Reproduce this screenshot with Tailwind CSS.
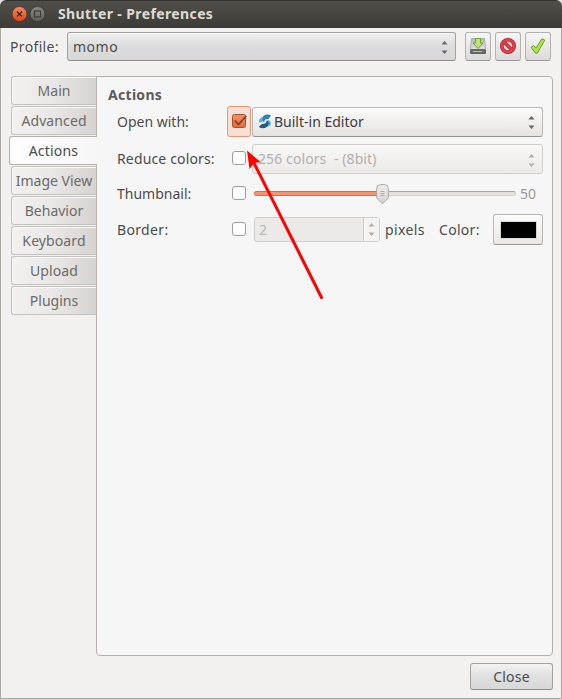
<!DOCTYPE html>
<html lang="en">
<head>
<meta charset="utf-8">
<title>Shutter - Preferences</title>
<script src="https://cdn.jsdelivr.net/npm/@tailwindcss/browser@4"></script>
</head>
<body class="w-[562px] h-[699px] overflow-hidden bg-[#e4e3e1]">
<div class="relative flex flex-col w-[562px] h-[699px] overflow-hidden rounded-t-[6px] bg-[#f2f1f0] text-[#4c4c4c] font-['Noto_Sans','Open_Sans',sans-serif] text-[14px] leading-[20px] whitespace-nowrap">
  <header class="flex items-center shrink-0 h-[28px] pl-[12px] bg-linear-to-b from-[#504f49] to-[#3c3b37] border-t border-[#33322e]">
    <svg class="w-[34px] h-[16px] -mt-px shrink-0" viewBox="0 0 34 16">
      <defs>
        <linearGradient id="closeFill" x2="0" y2="1"><stop stop-color="#f58a64"/><stop offset="1" stop-color="#dd4814"/></linearGradient>
        <linearGradient id="maxFill" x2="0" y2="1"><stop stop-color="#8b8a84"/><stop offset="1" stop-color="#605f59"/></linearGradient>
      </defs>
      <circle cx="7.5" cy="8" r="7.5" fill="url(#closeFill)" stroke="#33322e" stroke-width=".7"/>
      <path d="M5 5.5l5 5M10 5.5l-5 5" stroke="#3c2a22" stroke-width="1.3"/>
      <circle cx="25.5" cy="8" r="7.5" fill="url(#maxFill)" stroke="#33322e" stroke-width=".7"/>
      <rect x="22.5" y="5" width="6" height="6" fill="none" stroke="#383732" stroke-width="1.1"/>
    </svg>
    <h1 class="ml-[12px] -mt-px font-bold text-[#dfdbd2] tracking-[0.38px]">Shutter - Preferences</h1>
  </header>

  <main class="flex flex-col grow border-x border-b border-[#aca9a4]">
    <div class="flex h-[29px] mt-[4px] pl-[9px] items-center">
      <label class="w-[57px] tracking-[0.35px]">Profile:</label>
      <div class="flex items-center justify-between w-[389px] h-[29px] pl-[5px] pr-[7px] rounded-[3px] border border-[#a3a19e] border-b-[#8f8d8a] bg-linear-to-b from-[#f0f0f0] via-[#dcdcdc] to-[#d8d8d8] shadow-[inset_0_1px_0_#fafafa]">
        <span class="tracking-[0.5px]">momo</span>
        <svg class="w-[7px] h-[13px] mt-[2px]" viewBox="0 0 7 13"><path d="M.5 3.500L3.500 0l3 3.500zM.5 9.500L3.500 13l3-3.500z" fill="#686868"/></svg>
      </div>
      <div class="flex gap-[4px] ml-[9px]">
        <button class="flex items-center justify-center w-[26px] h-[29px] rounded-[3px] border border-[#b3b1ae] border-b-[#999794] bg-linear-to-b from-[#f6f6f6] to-[#dadada]">
          <svg class="w-[18px] h-[18px] -mt-px shrink-0" viewBox="0 0 18 18">
            <defs><linearGradient id="disk" x2="0" y2="1"><stop stop-color="#b4b6b2"/><stop offset="1" stop-color="#f2f2f0"/></linearGradient></defs>
            <path d="M2.500 1.500h13l1 9.500v5.500h-15v-5.500z" fill="url(#disk)" stroke="#a2a4a0" stroke-width=".8"/>
            <rect x="1.500" y="12.500" width="15" height="4" rx=".6" fill="#6a6c6a" stroke="#4a4d4c" stroke-width=".7"/>
            <path d="M4 14.500h9" stroke="#b8bab6"/>
            <path d="M6.500 1.500h5v4.500h2.500L9 11.500 4 6h2.500z" fill="#c0e27c" stroke="#6aa52a" stroke-width="1"/>
          </svg>
        </button>
        <button class="flex items-center justify-center w-[26px] h-[29px] rounded-[3px] border border-[#b3b1ae] border-b-[#999794] bg-linear-to-b from-[#f6f6f6] to-[#dadada]">
          <svg class="w-[18px] h-[18px] -mt-[2px] shrink-0" viewBox="0 0 18 18">
            <circle cx="9" cy="9" r="6.200" fill="#e8dede" stroke="#b51a2c" stroke-width="3.600"/>
            <path d="M4.800 4.800l8.400 8.400" stroke="#b51a2c" stroke-width="3.400"/>
            <circle cx="9" cy="9" r="6.200" fill="none" stroke="#dc4248" stroke-width="2.200"/>
            <path d="M4.800 4.800l8.400 8.400" stroke="#dc4248" stroke-width="2"/>
          </svg>
        </button>
        <button class="flex items-center justify-center w-[26px] h-[29px] rounded-[3px] border border-[#b3b1ae] border-b-[#999794] bg-linear-to-b from-[#f6f6f6] to-[#dadada]">
          <svg class="w-[18px] h-[18px] -mt-[2px] shrink-0" viewBox="0 0 18 18">
            <path d="M2 10.300l2.700-1.700 2.300 2.500L12.800 1.800l3 1.200L8.300 16.200H6.500z" fill="#b4df4c" stroke="#6d9f2c" stroke-width="1" stroke-linejoin="round"/>
          </svg>
        </button>
      </div>
    </div>

    <div class="flex mt-[15px] h-[580px] pl-[8px]">
      <nav class="relative z-10 flex flex-col gap-[1px] w-[88px] items-end text-center text-[#6b6a69] shrink-0 -mr-px">
        <div class="w-[86px] h-[29px] pt-[4px] rounded-l-[3px] border border-[#c4c2be] border-r-[#b9b6b1] bg-linear-to-r from-[#f2f1f0] via-[#e9e7e5] to-[#d5d2cf] shadow-[inset_1px_1px_0_#f9f8f7]">Main</div>
        <div class="w-[86px] h-[29px] pt-[4px] rounded-l-[3px] border border-[#c4c2be] border-r-[#b9b6b1] bg-linear-to-r from-[#f2f1f0] via-[#e9e7e5] to-[#d5d2cf] shadow-[inset_1px_1px_0_#f9f8f7] tracking-[0.1px]">Advanced</div>
        <div class="w-[88px] h-[29px] pt-[4px] rounded-l-[3px] border border-r-0 border-[#b4b1ac] bg-linear-to-r from-white to-[#f6f6f6] text-[#4c4c4c] tracking-[0.2px]">Actions</div>
        <div class="w-[86px] h-[29px] pt-[4px] rounded-l-[3px] border border-[#c4c2be] border-r-[#b9b6b1] bg-linear-to-r from-[#f2f1f0] via-[#e9e7e5] to-[#d5d2cf] shadow-[inset_1px_1px_0_#f9f8f7]">Image View</div>
        <div class="w-[86px] h-[29px] pt-[4px] rounded-l-[3px] border border-[#c4c2be] border-r-[#b9b6b1] bg-linear-to-r from-[#f2f1f0] via-[#e9e7e5] to-[#d5d2cf] shadow-[inset_1px_1px_0_#f9f8f7]">Behavior</div>
        <div class="w-[86px] h-[29px] pt-[4px] rounded-l-[3px] border border-[#c4c2be] border-r-[#b9b6b1] bg-linear-to-r from-[#f2f1f0] via-[#e9e7e5] to-[#d5d2cf] shadow-[inset_1px_1px_0_#f9f8f7] tracking-[0.1px]">Keyboard</div>
        <div class="w-[86px] h-[29px] pt-[4px] rounded-l-[3px] border border-[#c4c2be] border-r-[#b9b6b1] bg-linear-to-r from-[#f2f1f0] via-[#e9e7e5] to-[#d5d2cf] shadow-[inset_1px_1px_0_#f9f8f7] tracking-[0.1px]">Upload</div>
        <div class="w-[86px] h-[29px] pt-[4px] rounded-l-[3px] border border-[#c4c2be] border-r-[#b9b6b1] bg-linear-to-r from-[#f2f1f0] via-[#e9e7e5] to-[#d5d2cf] shadow-[inset_1px_1px_0_#f9f8f7]">Plugins</div>
      </nav>

      <section class="w-[457px] h-[580px] rounded-r-[4px] rounded-bl-[4px] border border-[#b4b1ac] bg-[#f6f6f6] pl-[11px] pt-[8px]">
        <h2 class="font-bold text-[#5c5b5a] tracking-[0.3px]">Actions</h2>

        <div class="flex items-center h-[31px] mt-[1px] pl-[9px]">
          <label class="w-[110px]">Open with:</label>
          <span class="flex items-center justify-center w-[24px] h-[31px] rounded-[3px] border border-[#f2946e] bg-[#f6dfd7] shrink-0">
            <svg class="w-[16px] h-[16px] -mt-px" viewBox="0 0 16 16">
              <defs><linearGradient id="tick" x2="0" y2="1"><stop stop-color="#f39066"/><stop offset="1" stop-color="#e9693a"/></linearGradient></defs>
              <rect x="1.500" y="1.500" width="13" height="13" rx="2" fill="url(#tick)" stroke="#a5502c"/>
              <path d="M3.800 7.500l3.600 4L15.300 3" fill="none" stroke="#7a3f29" stroke-width="1.700"/>
            </svg>
          </span>
          <div class="flex items-center w-[291px] h-[30px] ml-[1px] pl-[5px] pr-[7px] rounded-[3px] border border-[#b9b7b4] border-b-[#94928f] bg-linear-to-b from-[#fbfbfb] to-[#e4e3e1]">
            <svg class="w-[14px] h-[15px]" viewBox="0 0 14 15">
              <path d="M13 1.500C9-.5 4.500 1 4 5c0 2 1 3 2.500 3C6 5.500 8 4.500 10.500 5z" fill="#2b83b5"/>
              <path d="M5 3C2 3.500.5 6 1 8.500l4-.5C3.500 7 3.500 5 5 3z" fill="#5db4dc"/>
              <path d="M.8 13C4.500 15.500 10 14 11 10c.3-2.200-1-3.500-2.700-3.500C9 9 6.500 10.500 4 10z" fill="#1c5f8e"/>
              <path d="M9.500 6C12 6.300 13.300 8 12.500 11L9.500 13C11.300 10.500 11 8 9.500 6z" fill="#4aa3d0"/>
            </svg>
            <span class="ml-[2px] grow text-[#3c3c3c]">Built-in Editor</span>
            <svg class="w-[7px] h-[13px] mt-[2px]" viewBox="0 0 7 13"><path d="M.5 3.500L3.500 0l3 3.500zM.5 9.500L3.500 13l3-3.500z" fill="#686868"/></svg>
          </div>
        </div>

        <div class="flex items-center h-[30px] mt-[7px] pl-[9px]">
          <label class="w-[115px] tracking-[0.15px]">Reduce colors:</label>
          <span class="w-[14px] h-[14px] -mt-[2px] rounded-[3px] border border-[#a19d99] bg-white shrink-0"></span>
          <div class="flex items-center justify-between w-[291px] h-[30px] ml-[6px] pl-[5px] pr-[7px] rounded-[3px] border border-[#d0cecb] bg-linear-to-b from-[#f7f7f6] to-[#ebeae8] text-[#b2afac]">
            <span class="whitespace-pre tracking-[0.1px]">256 colors  - (8bit)</span>
            <svg class="w-[7px] h-[13px] mt-[2px]" viewBox="0 0 7 13"><path d="M.5 3.500L3.500 0l3 3.500zM.5 9.500L3.500 13l3-3.500z" fill="#b2afac"/></svg>
          </div>
        </div>

        <div class="flex items-center h-[30px] mt-[5px] pl-[9px]">
          <label class="w-[115px]">Thumbnail:</label>
          <span class="w-[14px] h-[14px] -mt-[2px] rounded-[3px] border border-[#a19d99] bg-white shrink-0"></span>
          <div class="relative w-[262px] h-[20px] ml-[8px]">
            <div class="flex mt-[7px] h-[5px] rounded-[3px] border border-[#d6d3cf] border-t-[#a9a5a0] bg-[#e4e2df]">
              <div class="-mt-px -ml-px h-[5px] w-[130px] rounded-l-[3px] border border-[#d66f45] bg-[#f49470]"></div>
            </div>
            <svg class="absolute left-[122px] top-0 w-[13px] h-[21px]" viewBox="0 0 13 21">
              <defs><linearGradient id="knob" x2="0" y2="1"><stop stop-color="#f0efed"/><stop offset="1" stop-color="#d3d1ce"/></linearGradient></defs>
              <path d="M.7 4.500Q.7.600 4.500.600h4Q12.300.600 12.300 4.500v9.500L6.500 19.800.7 14z" fill="url(#knob)" stroke="#aaa7a3"/>
              <path d="M4.500 7.500h4M4.500 9.500h4M4.500 11.500h4" stroke="#a09d99" stroke-width=".8"/>
            </svg>
          </div>
          <span class="ml-[4px] text-[#9c9a97]">50</span>
        </div>

        <div class="flex items-center h-[32px] mt-[5px] pl-[9px]">
          <label class="w-[115px] tracking-[0.35px]">Border:</label>
          <span class="w-[14px] h-[14px] -mt-[2px] rounded-[3px] border border-[#a19d99] bg-white shrink-0"></span>
          <div class="flex w-[126px] h-[25px] ml-[8px] -mt-px rounded-[3px] border border-[#d0cecb] bg-[#ebeae8] text-[#b9b6b3]">
            <span class="grow pl-[4px] pt-[2px]">2</span>
            <span class="flex items-center justify-center w-[16px] border-l border-[#d0cecb] bg-[#f4f3f2]">
              <svg class="w-[7px] h-[13px]" viewBox="0 0 7 13"><path d="M.5 3.500L3.500 0l3 3.500zM.5 9.500L3.500 13l3-3.500z" fill="#b2afac"/></svg>
            </span>
          </div>
          <span class="ml-[5px] w-[54px] tracking-[0.4px]">pixels</span>
          <label class="w-[54px] tracking-[0.3px]">Color:</label>
          <button class="flex items-center justify-center w-[50px] h-[31px] -mt-px rounded-[3px] border border-[#b9b7b4] border-b-[#999794] bg-linear-to-b from-[#fbfbfb] to-[#e9e8e6]">
            <span class="w-[37px] h-[18px] border border-[#dcd6d3] bg-black"></span>
          </button>
        </div>
      </section>
    </div>

    <button class="self-end mt-[7px] mr-[8px] w-[83px] h-[27px] rounded-[3px] border border-[#a3a19e] border-b-[#8f8d8a] bg-linear-to-b from-[#f2f2f2] via-[#e0e0e0] to-[#d8d8d8] tracking-[0.2px] leading-[24px]">Close</button>
  </main>

  <svg class="absolute left-[240px] top-[145px] w-[90px] h-[160px] pointer-events-none" viewBox="0 0 90 160">
    <path d="M81.500 152.500L12.500 15" stroke="#f00" stroke-width="3" stroke-linecap="round"/>
    <path d="M7 5.500L20.500 17 14 18 9.500 24z" fill="#f00"/>
  </svg>
</div>
</body>
</html>
